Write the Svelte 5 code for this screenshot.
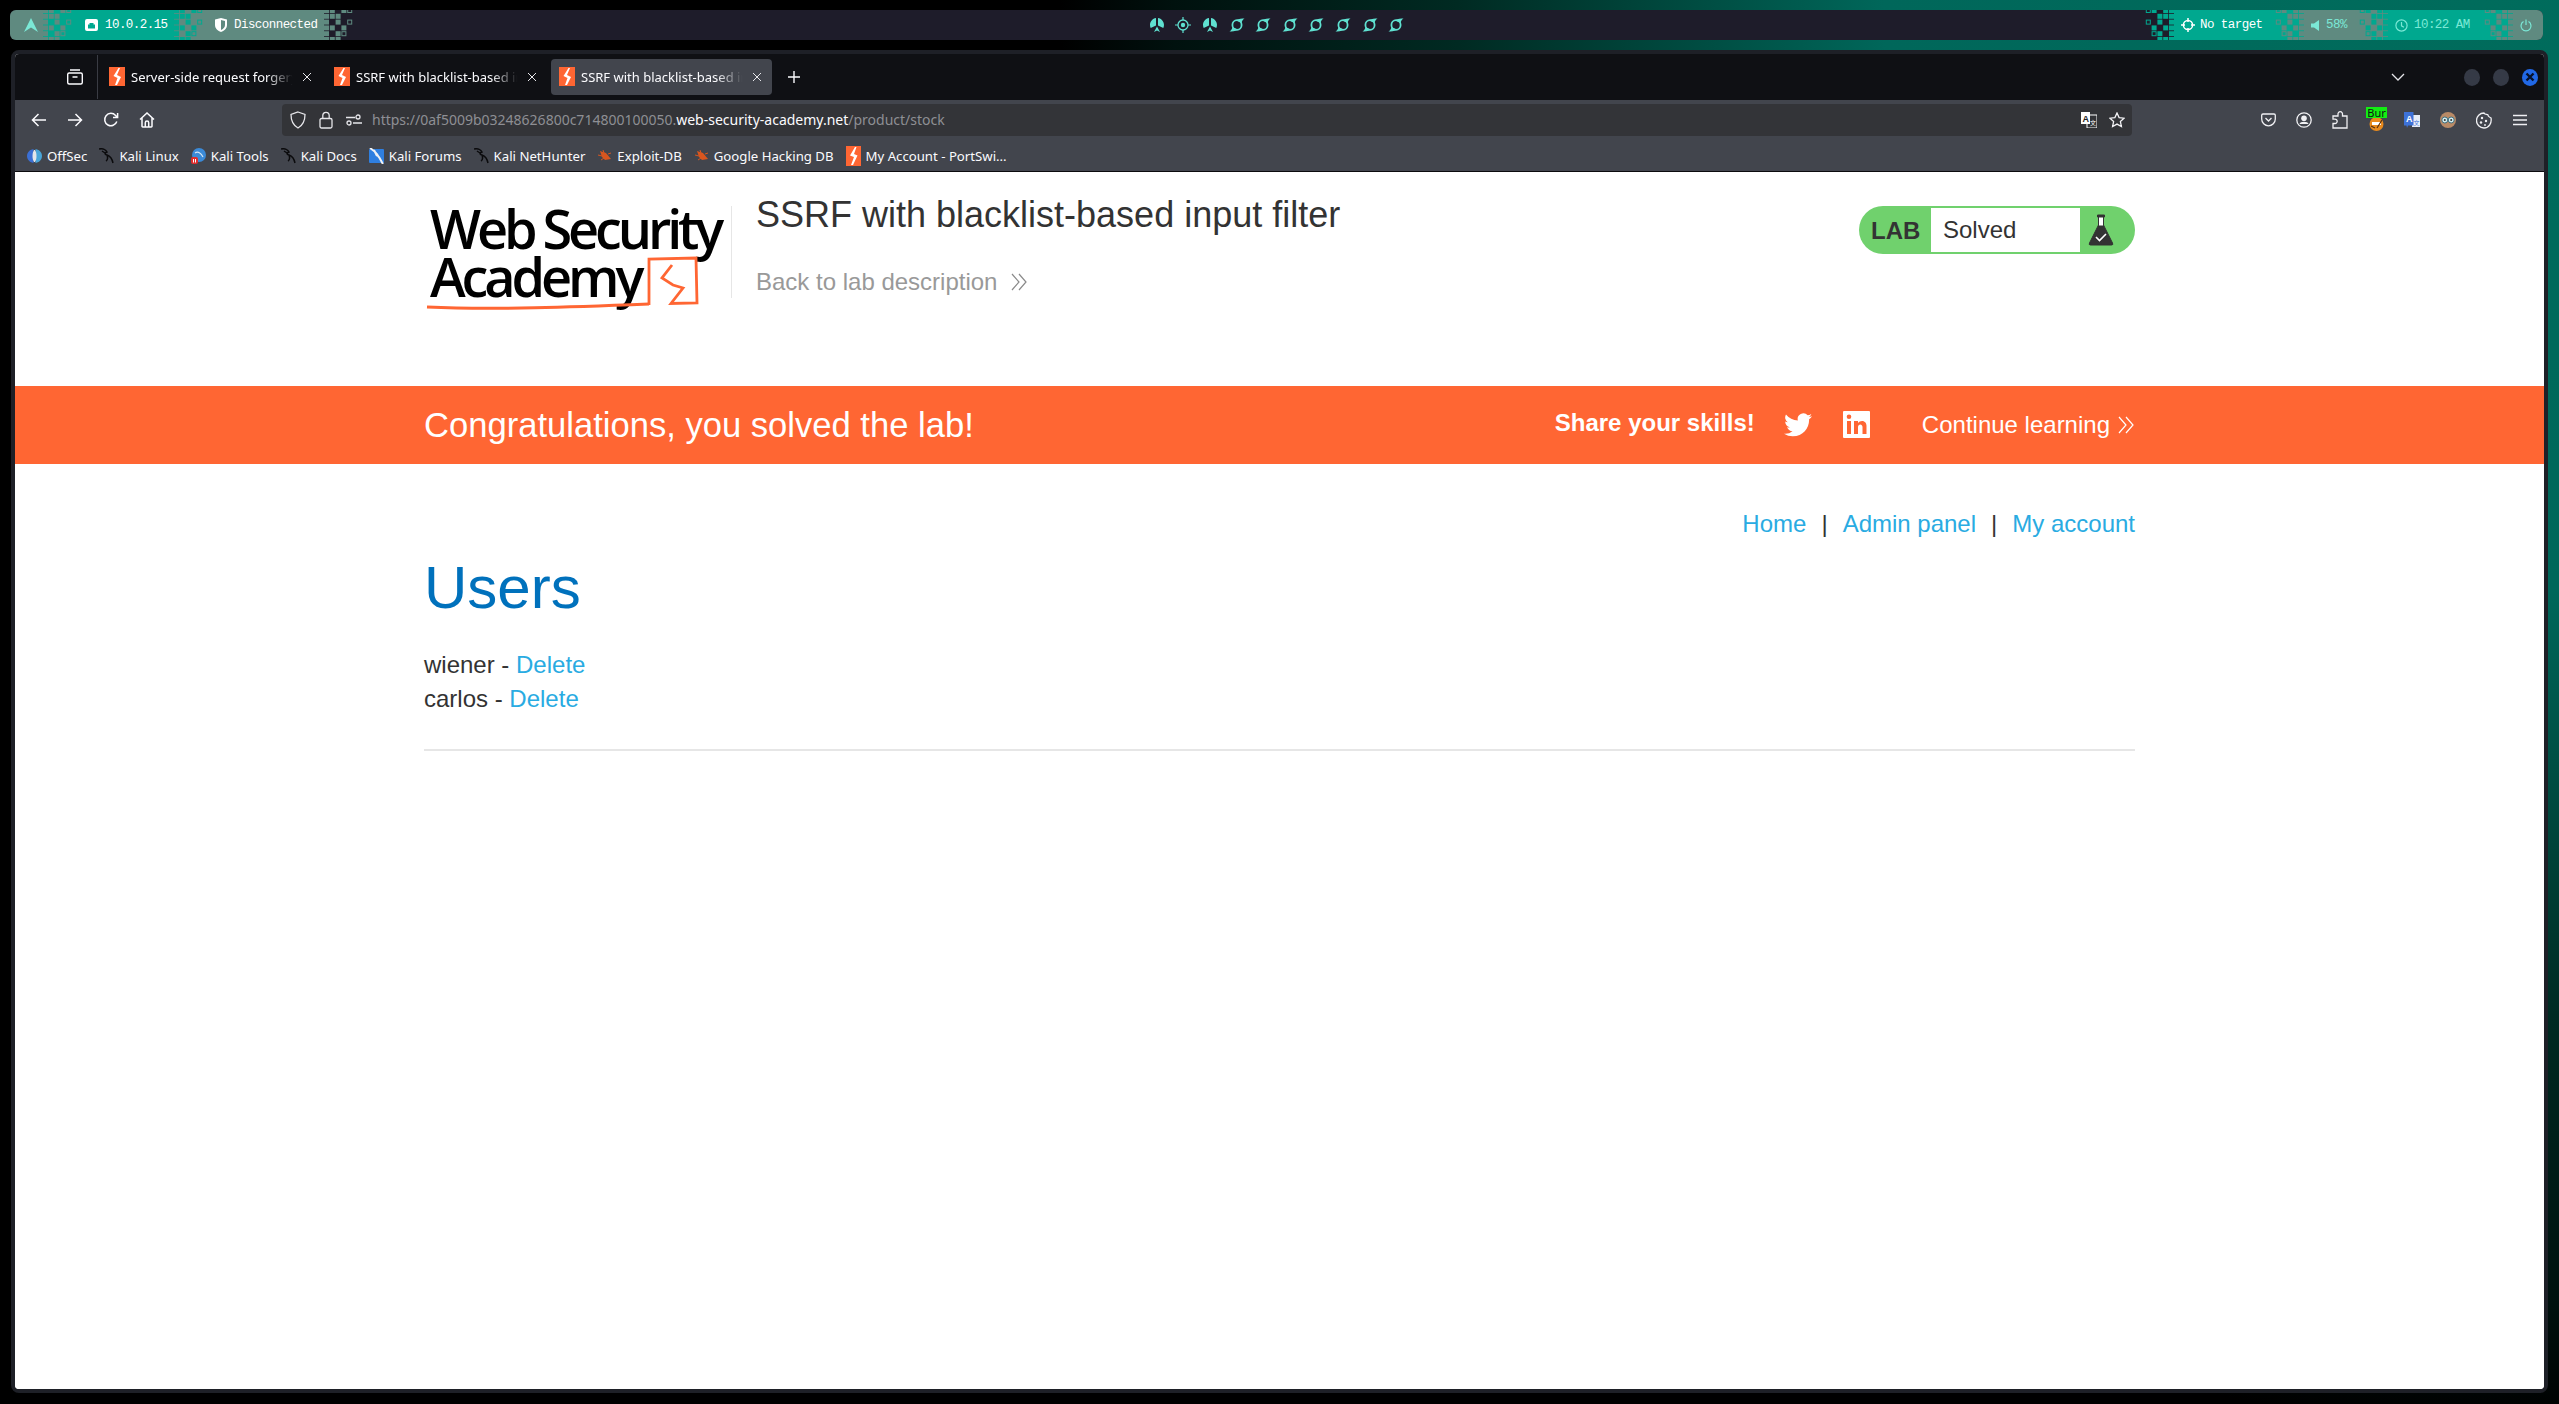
<script>
	const grey = "#5f8a80";
	const teal = "#00a88f";
	const dark = "#1e1c2a";

	// '#' solid square, 'o' outlined square, '.' nothing
	const pattern = ["##.#o", "###..", "#.#.o", "##.#.", "#.#o.", "###.."];
	const tiles = [];
	pattern.forEach((row, r) => {
		[...row].forEach((c, i) => {
			if (c !== ".") tiles.push({ x: i * 5.8, y: r * 5.8 - 2, hollow: c === "o" });
		});
	});

	const swirls = [0, 1, 2, 3, 4, 5, 6];
	const marks = [
		{ name: "OffSec", icon: "offsec" },
		{ name: "Kali Linux", icon: "kali" },
		{ name: "Kali Tools", icon: "tools" },
		{ name: "Kali Docs", icon: "kali" },
		{ name: "Kali Forums", icon: "forums" },
		{ name: "Kali NetHunter", icon: "kali" },
		{ name: "Exploit-DB", icon: "bug" },
		{ name: "Google Hacking DB", icon: "bug" },
		{ name: "My Account - PortSwi...", icon: "ps" },
	];
	const tabs = [
		{ title: "Server-side request forgery", active: false },
		{ title: "SSRF with blacklist-based input filter", active: false },
		{ title: "SSRF with blacklist-based input filter", active: true },
	];
</script>

{#snippet gap(from, to, flip)}
	<svg class="gap" width="29" height="30" viewBox="0 0 29 30">
		<rect width="29" height="30" fill={to} />
		<g transform={flip ? "translate(29 0) scale(-1 1)" : ""}>
			{#each tiles as t}
				{#if t.hollow}
					<rect x={t.x + 0.5} y={t.y + 0.5} width="4" height="4" fill="none" stroke={from} />
				{:else}
					<rect x={t.x} y={t.y} width="5" height="5" fill={from} />
				{/if}
			{/each}
		</g>
	</svg>
{/snippet}

{#snippet favicon()}
	<svg class="fav" width="16" height="19" viewBox="0 0 16 19">
		<rect width="16" height="19" fill="#ff6633" />
		<path d="M9.500 1 L4.500 9 L8.500 11 L6 18 L8 18 L12 10 L8 8 L11 1Z" fill="#fff" />
	</svg>
{/snippet}

{#snippet markIcon(kind)}
	{#if kind === "offsec"}
		<svg width="15" height="16" viewBox="0 0 15 16">
			<path d="M6.500 1 C2 2 0 5 0 8 C0 11 2 14 6.500 15Z" fill="#3b6fd4" />
			<path d="M8.500 1 C13 2 15 5 15 8 C15 11 13 14 8.500 15Z" fill="#4aa5d8" />
			<path d="M7 2 C5 5 5 11 7 14 L8 14 C10 11 10 5 8 2Z" fill="#e3e6ea" />
		</svg>
	{:else if kind === "kali"}
		<svg width="15" height="16" viewBox="0 0 15 16">
			<path d="M0 1 C4 0 7 2 8 4 C6 5 5 6 8 7 C11 8 13 10 14 15 M8 7 C9 10 9 12 7 13 M3 3 L6 5" fill="none" stroke="#0b0b0d" stroke-width="1.500" />
		</svg>
	{:else if kind === "tools"}
		<svg width="15" height="16" viewBox="0 0 15 16">
			<circle cx="8" cy="7" r="7" fill="#3b8ad8" />
			<path d="M4 5 C7 3 10 5 12 9" fill="none" stroke="#d6e6f5" stroke-width="1.200" />
			<rect x="0" y="9" width="7" height="7" rx="2" fill="#e02d2d" />
			<path d="M2.500 11v3.500M4.500 11v3.500" stroke="#fff" />
		</svg>
	{:else if kind === "forums"}
		<svg width="15" height="16" viewBox="0 0 15 16">
			<rect y="1" width="15" height="14" rx="1" fill="#2f7fe0" />
			<path d="M1 0 C5 3 8 5 9 8 C11 10 12 13 14 16 M5 2 L8 8" fill="none" stroke="#f0f2f5" stroke-width="2" />
		</svg>
	{:else if kind === "bug"}
		<svg width="15" height="16" viewBox="0 0 15 16">
			<path d="M3 3 L9 5 L14 11 L8 12 L5 9Z" fill="#d8561f" />
			<path d="M1 7 L5 8 M4 12 L7 10 M6 2 L7 5 M11 6 L14 5" stroke="#d8561f" />
		</svg>
	{:else}
		<svg width="15" height="20" viewBox="0 0 15 20">
			<rect width="15" height="20" fill="#ff6633" />
			<path d="M9 1 L4 9.500 L8 11 L5 19 L7 19 L11.500 9.500 L8 8 L10.500 1Z" fill="#fff" />
		</svg>
	{/if}
{/snippet}

<div class="desktop">
	<div class="statusbar">
		<div class="side">
			<div class="seg grey first">
				<svg width="14" height="14" viewBox="0 0 14 14"><path d="M7 0 L14 14 L7 9.500 L0 14Z" fill="#7be8d6" /></svg>
			</div>
			{@render gap(grey, teal, false)}
			<div class="seg teal ip">
				<svg width="13" height="12" viewBox="0 0 13 12"><path fill-rule="evenodd" d="M2 0h9a2 2 0 0 1 2 2v8a2 2 0 0 1-2 2H2a2 2 0 0 1-2-2V2a2 2 0 0 1 2-2ZM3 9.500h7V5.500H8.500V4h-4v1.500H3Z" fill="#fff" /></svg>
				<span>10.0.2.15</span>
			</div>
			{@render gap(teal, grey, false)}
			<div class="seg grey vpn">
				<svg width="12" height="14" viewBox="0 0 12 14"><path fill-rule="evenodd" d="M0 1.500 L6 0 L12 1.500 V7 C12 10.500 9 13 6 14 C3 13 0 10.500 0 7Z M6 2 V12 C8 11 10 9.500 10 7 V3Z" fill="#fff" /></svg>
				<span>Disconnected</span>
			</div>
			{@render gap(grey, dark, false)}
		</div>

		<div class="workspaces">
			<svg width="16" height="16" viewBox="0 0 16 16"><path d="M7 1 C3.500 1.500 1 4.500 1 8 C1 9 1.300 10 1.700 11 L7 8.500Z M9 1 C12.500 1.500 15 4.500 15 8 C15 9 14.700 10 14.300 11 L9 8.500Z M8 9.500 L11 15 L8 13.500 L5 15Z" fill="#5fe0d0" /></svg>
			<svg width="16" height="16" viewBox="0 0 16 16"><circle cx="8" cy="8" r="5" fill="none" stroke="#5fe0d0" stroke-width="1.300" /><circle cx="8" cy="8" r="2.200" fill="#5fe0d0" /><path d="M8 0v3M8 13v3M0 8h3M13 8h3" stroke="#5fe0d0" stroke-width="1.200" /></svg>
			<svg width="16" height="16" viewBox="0 0 16 16"><path d="M7 1 C3.500 1.500 1 4.500 1 8 C1 9 1.300 10 1.700 11 L7 8.500Z M9 1 C12.500 1.500 15 4.500 15 8 C15 9 14.700 10 14.300 11 L9 8.500Z M8 9.500 L11 15 L8 13.500 L5 15Z" fill="#5fe0d0" /></svg>
			{#each swirls as s (s)}
				<svg width="16" height="16" viewBox="0 0 16 16"><ellipse cx="8" cy="8" rx="4.600" ry="4.800" fill="none" stroke="#5fe0d0" stroke-width="1.800" /><path d="M7 3.500 C10 1.500 13 1.500 15.500 1.500 C14 2.500 13 3.500 12.500 6Z M9 12.500 C6 14.500 3 14.500 0.500 14.500 C2 13.500 3 12.500 3.500 10Z" fill="#5fe0d0" /></svg>
			{/each}
		</div>

		<div class="side right">
			{@render gap(teal, dark, true)}
			<div class="seg teal target">
				<svg width="14" height="14" viewBox="0 0 14 14"><circle cx="7" cy="7" r="4.600" fill="none" stroke="#fff" stroke-width="1.500" /><path d="M7 0v4M7 10v4M0 7h4M10 7h4" stroke="#fff" stroke-width="1.500" /></svg>
				<span>No target</span>
			</div>
			{@render gap(grey, teal, true)}
			<div class="seg grey vol">
				<svg width="9" height="11" viewBox="0 0 9 11"><path d="M0 3.500h3L8 0v11L3 7.500H0Z" fill="#7be8d6" /></svg>
				<span>58%</span>
			</div>
			{@render gap(teal, grey, true)}
			<div class="seg teal clock">
				<svg width="13" height="13" viewBox="0 0 13 13"><circle cx="6.500" cy="6.500" r="5.600" fill="none" stroke="#7be8d6" stroke-width="1.200" /><path d="M6.500 3v3.800l2.400 1.400" fill="none" stroke="#7be8d6" stroke-width="1.200" /></svg>
				<span>10:22 AM</span>
			</div>
			{@render gap(grey, teal, true)}
			<div class="seg grey last">
				<svg width="12" height="13" viewBox="0 0 12 13"><path d="M3.500 2.600 A5 5 0 1 0 8.500 2.600 M6 0.500v5.500" fill="none" stroke="#7be8d6" stroke-width="1.200" /></svg>
			</div>
		</div>
	</div>

	<div class="window">
		<div class="titlebar">
			<div class="tabview">
				<svg width="18" height="16" viewBox="0 0 18 16" fill="none" stroke="#fbfbfe" stroke-width="1.400"><rect x="1.700" y="4" width="14.600" height="11" rx="1.500" /><path d="M4 1h10M6.500 8h5" /></svg>
			</div>
			<div class="tabs">
				{#each tabs as tab}
					<div class="tab" class:active={tab.active}>
						{@render favicon()}
						<span class="tab-title">{tab.title}</span>
						<svg class="close" width="10" height="10" viewBox="0 0 10 10"><path d="M1 1l8 8M9 1l-8 8" stroke="#e6e6ea" stroke-width="1" /></svg>
					</div>
				{/each}
			</div>
			<svg class="plus" width="14" height="14" viewBox="0 0 14 14"><path d="M7 1v12M1 7h12" stroke="#fbfbfe" stroke-width="1.400" /></svg>
			<svg class="alltabs" width="14" height="8" viewBox="0 0 14 8"><path d="M1 1l6 6 6-6" fill="none" stroke="#e6e6ea" stroke-width="1.300" /></svg>
			<div class="winbtns">
				<span class="dot"></span>
				<span class="dot"></span>
				<span class="dot closebtn">
					<svg width="10" height="10" viewBox="0 0 10 10"><path d="M1.500 1.500l7 7M8.500 1.500l-7 7" stroke="#06122a" stroke-width="2.400" /></svg>
				</span>
			</div>
		</div>

		<div class="navrow">
			<div class="navbtn"><svg width="16" height="14" viewBox="0 0 16 14"><path d="M15 7H1.500M7.500 1 1.500 7l6 6" /></svg></div>
			<div class="navbtn"><svg width="16" height="14" viewBox="0 0 16 14"><path d="M1 7h13.500M8.500 1l6 6-6 6" /></svg></div>
			<div class="navbtn"><svg width="16" height="16" viewBox="0 0 16 16"><path d="M13.800 9.500A6.200 6.200 0 1 1 12.600 3.500L14.600 5.600M14.600 1v4.600H10" /></svg></div>
			<div class="navbtn"><svg width="16" height="16" viewBox="0 0 16 16"><path d="M1 7.500 8 1l7 6.500M3 6v8.300a.7.7 0 0 0 .7.7h8.600a.7.7 0 0 0 .7-.7V6M6.300 15v-4.300a1.700 1.700 0 0 1 3.400 0V15" /></svg></div>

			<div class="urlbar">
				<svg class="u-shield" width="16" height="18" viewBox="0 0 16 18" fill="none" stroke="#e6e6ea" stroke-width="1.300"><path d="M8 1 L15 3.500 C15 10 12.500 14.500 8 17 C3.500 14.500 1 10 1 3.500Z" /></svg>
				<svg class="u-lock" width="14" height="18" viewBox="0 0 14 18" fill="none" stroke="#e6e6ea" stroke-width="1.300"><rect x="1" y="7.500" width="12" height="9.500" rx="1.500" /><path d="M3.800 7.500V4.500a3.200 3.200 0 0 1 6.400 0v3" /></svg>
				<svg class="u-perm" width="16" height="12" viewBox="0 0 16 12" fill="none" stroke="#e6e6ea" stroke-width="1.300"><path d="M0 3.500h9M7 9h9" /><circle cx="12" cy="3" r="2" /><circle cx="3" cy="9" r="2" /></svg>
				<span class="url"><span class="dim">https://0af5009b03248626800c714800100050.</span>web-security-academy.net<span class="dim">/product/stock</span></span>
				<svg class="u-trans" width="16" height="16" viewBox="0 0 16 16"><rect x="6" y="3" width="10" height="13" fill="none" stroke="#fff" /><rect width="9" height="12" fill="#fff" /><text x="1.500" y="9.500" class="u-a">A</text><text x="9" y="13" class="u-b">文</text></svg>
				<svg class="u-star" width="16" height="16" viewBox="0 0 16 16"><path d="M8 1l2.100 4.600 5 .6-3.700 3.400 1 5L8 12.100 3.600 14.600l1-5L.9 6.200l5-.6Z" fill="none" stroke="#f3f3f6" stroke-width="1.300" /></svg>
			</div>

			<div class="tools">
				<div class="tool"><svg width="15" height="14" viewBox="0 0 15 14"><path d="M2 1h11a1.300 1.300 0 0 1 1.300 1.300V6A6.800 6.800 0 0 1 .7 6V2.300A1.300 1.300 0 0 1 2 1Z M4.500 5 7.500 8 10.500 5" fill="none" stroke="#f0f0f3" stroke-width="1.300" /></svg></div>
				<div class="tool"><svg width="16" height="16" viewBox="0 0 16 16"><circle cx="8" cy="8" r="7.200" fill="none" stroke="#f0f0f3" stroke-width="1.300" /><circle cx="8" cy="6.300" r="2.800" fill="#f0f0f3" /><path d="M3.500 12a4.600 2.900 0 0 1 9 0Z" fill="#f0f0f3" /></svg></div>
				<div class="tool"><svg width="16" height="18" viewBox="0 0 16 18"><path d="M6 3.500a2.300 2.300 0 1 1 4.500 0V5H15v12H1v-4.500h2a2.200 2.200 0 1 0 0-4.400H1V5h5Z" fill="none" stroke="#f0f0f3" stroke-width="1.300" /></svg></div>
				<div class="tool burp">
					<svg width="15" height="14" viewBox="0 0 15 14"><circle cx="7.500" cy="7" r="7" fill="#e88a1e" /><path d="M3 5h9v3H3Z" fill="#fff" /><path d="M2 9l4 2M13 3l-5 8" stroke="#5a3110" stroke-width="1.200" /></svg>
					<span class="badge">Bur</span>
				</div>
				<div class="tool"><svg width="16" height="17" viewBox="0 0 16 17"><rect x="8" y="3" width="8" height="12" fill="#e8eef8" /><path d="M0 0h9.500v13.500H4L3 16l-.5-2.500H0Z" fill="#3d72d8" /><text x="2" y="10" class="t-a">A</text><text x="9.500" y="12.500" class="t-b">文</text></svg></div>
				<div class="tool"><svg width="16" height="16" viewBox="0 0 16 16"><circle cx="8" cy="8" r="8" fill="#b98a66" /><circle cx="4.800" cy="8" r="3" fill="#d4eef0" stroke="#3f6f80" /><circle cx="11.200" cy="8" r="3" fill="#d4eef0" stroke="#3f6f80" /><circle cx="4.800" cy="8" r="1" fill="#333" /><circle cx="11.200" cy="8" r="1" fill="#333" /></svg></div>
				<div class="tool"><svg width="16" height="17" viewBox="0 0 16 17"><path d="M8 1c1 2 3 1 4 2 0 2 2 2 3 3 1 5-2 10-7 10A7.500 7.500 0 0 1 8 1Z" fill="none" stroke="#f0f0f3" stroke-width="1.300" /><circle cx="6" cy="6" r="1.200" fill="#f0f0f3" /><circle cx="5" cy="10.500" r="1.200" fill="#f0f0f3" /><circle cx="10" cy="9" r="1.200" fill="#f0f0f3" /><circle cx="9" cy="13" r=".9" fill="#f0f0f3" /></svg></div>
				<div class="tool"><svg width="14" height="12" viewBox="0 0 14 12"><path d="M0 1.500h14M0 6h14M0 10.500h14" stroke="#f0f0f3" stroke-width="1.300" /></svg></div>
			</div>
		</div>

		<div class="bookmarks">
			{#each marks as m}
				<div class="mark">
					{@render markIcon(m.icon)}
					<span>{m.name}</span>
				</div>
			{/each}
		</div>

		<div class="page">
			<header class="wrap lab-head">
				<div class="logo">
					<div class="logo-text">Web Security</div>
					<div class="logo-text second">Academy</div>
					<svg class="logo-mark" width="280" height="60" viewBox="0 0 280 60" fill="none" stroke="#ff6633">
						<path d="M3 51 C70 54 150 51 225 48" stroke-width="3" />
						<path d="M225 49 V3 L272 2 L273 47 L247 47.500 L259 32 L249 29 L238 22 L248 9" stroke-width="2.800" />
					</svg>
				</div>
				<div class="head-text">
					<h2>SSRF with blacklist-based input filter</h2>
					<div class="back">
						<span>Back to lab description</span>
						<svg width="17" height="18" viewBox="0 0 17 18" fill="none" stroke="#8a8a8a" stroke-width="1.200"><path d="M1 1l7 8-7 8M8 1l7 8-7 8" /></svg>
					</div>
				</div>
				<div class="lab-status">
					<span class="lab-word">LAB</span>
					<span class="lab-state">Solved</span>
					<span class="lab-flask">
						<svg width="26" height="32" viewBox="0 0 26 32"><path d="M9.500 1h7v2h-1v8l9 18q1 2-1 2H2.500q-2 0-1-2l9-18V3h-1Z" fill="#333" stroke="#333" /><rect x="11" y="3.500" width="4" height="8" fill="#fff" /><path d="M8 23l3.500 3.500L18 20" fill="none" stroke="#fff" stroke-width="1.600" /></svg>
					</span>
				</div>
			</header>

			<div class="banner">
				<div class="wrap banner-in">
					<h4>Congratulations, you solved the lab!</h4>
					<strong class="share">Share your skills!</strong>
					<svg class="tw" width="28" height="24" viewBox="0 0 24 20"><path d="M24 2.400c-.900.400-1.800.700-2.800.800 1-.600 1.800-1.600 2.200-2.700-1 .600-2 1-3.100 1.200A4.900 4.900 0 0 0 11.900 6.200 14 14 0 0 1 1.700 1a4.900 4.900 0 0 0 1.500 6.600c-.800 0-1.600-.200-2.200-.600 0 2.400 1.700 4.400 3.900 4.900-.700.200-1.500.200-2.200.100.600 2 2.400 3.400 4.600 3.400A9.900 9.900 0 0 1 0 17.500 14 14 0 0 0 7.500 19.700c9.100 0 14.300-7.700 14-14.600 1-.700 1.800-1.600 2.500-2.700Z" fill="#fff" /></svg>
					<svg class="li" width="27" height="27" viewBox="0 0 27 27"><path fill-rule="evenodd" d="M1 0h25a1 1 0 0 1 1 1v25a1 1 0 0 1-1 1H1a1 1 0 0 1-1-1V1a1 1 0 0 1 1-1ZM4 10v13h4V10Zm2-6.500a2.300 2.300 0 1 0 0 4.600 2.300 2.300 0 0 0 0-4.600ZM11 10v13h4v-7c0-3.500 4.500-3.500 4.500 0v7h4v-8c0-6-6.500-6-8.500-3v-2Z" fill="#fff" /></svg>
					<span class="continue">Continue learning</span>
					<svg class="chev" width="17" height="18" viewBox="0 0 17 18" fill="none" stroke="#fff" stroke-width="1.200"><path d="M1 1l7 8-7 8M8 1l7 8-7 8" /></svg>
				</div>
			</div>

			<section class="wrap content">
				<nav class="links">
					<a href="#home">Home</a><span class="pipe">|</span><a href="#admin">Admin panel</a><span class="pipe">|</span><a href="#account">My account</a>
				</nav>
				<h1>Users</h1>
				<div class="users">
					<div>wiener - <a href="#del1">Delete</a></div>
					<div>carlos - <a href="#del2">Delete</a></div>
				</div>
				<hr />
			</section>
		</div>
	</div>
</div>

<style>
	:global(body) {
		margin: 0;
		background: #000;
	}
	.desktop {
		width: 2559px;
		height: 1404px;
		box-sizing: border-box;
		padding-top: 10px;
		overflow: hidden;
		background: radial-gradient(circle 1420px at 2480px 0, #006c5c 0, #00675a 42%, #002a22 72%, #00110e 92%, #000 100%);
	}

	.statusbar {
		display: grid;
		grid-template-columns: 1fr auto 1fr;
		align-items: center;
		width: 2533px;
		height: 30px;
		margin-left: 10px;
		background: #1e1c2a;
		border-radius: 6px;
		overflow: hidden;
		font: 12.500px "Liberation Mono", monospace;
		letter-spacing: -0.55px;
		color: #fff;
	}
	.side {
		display: flex;
		height: 30px;
	}
	.side.right {
		justify-content: flex-end;
	}
	.gap {
		display: block;
		flex: none;
	}
	.seg {
		display: flex;
		align-items: center;
		height: 30px;
		box-sizing: border-box;
		flex: none;
	}
	.grey {
		background: #5f8a80;
	}
	.teal {
		background: #00a88f;
	}
	.first {
		width: 33px;
		padding-left: 14px;
	}
	.ip {
		width: 102px;
		padding-left: 13px;
		gap: 7px;
	}
	.vpn {
		width: 121px;
		padding-left: 12px;
		gap: 7px;
	}
	.target {
		width: 101px;
		padding-left: 7px;
		gap: 5px;
	}
	.vol {
		width: 55px;
		padding-left: 7px;
		gap: 6px;
		color: #7be8d6;
	}
	.clock {
		width: 96px;
		padding-left: 7px;
		gap: 6px;
		color: #7be8d6;
	}
	.last {
		width: 30px;
		padding-left: 7px;
	}
	.workspaces {
		display: flex;
		gap: 10.600px;
		align-items: center;
	}
	.workspaces svg {
		display: block;
	}

	.window {
		width: 2537px;
		height: 1343px;
		box-sizing: border-box;
		margin: 10px 0 0 11px;
		border: 4px solid #1e2027;
		border-radius: 8px;
		overflow: hidden;
		display: flex;
		flex-direction: column;
		background: #fff;
		font-family: "Noto Sans", sans-serif;
	}
	.titlebar {
		height: 46px;
		flex: none;
		display: flex;
		align-items: center;
		background: #0f1014;
	}
	.tabview {
		width: 83px;
		height: 44px;
		box-sizing: border-box;
		padding: 14px 0 0 51px;
		border-right: 1px solid #3a3c44;
	}
	.tabview svg {
		display: block;
	}
	.tabs {
		display: flex;
		gap: 4px;
		margin-left: 3px;
	}
	.tab {
		width: 221px;
		height: 36px;
		box-sizing: border-box;
		padding: 0 10px 1px 8px;
		display: flex;
		align-items: center;
		gap: 6px;
		border-radius: 4px;
		color: #fbfbfe;
		font-size: 13px;
	}
	.tab.active {
		background: #42454d;
	}
	.tab-title {
		flex: 1;
		padding-top: 1px;
		white-space: nowrap;
		overflow: hidden;
		-webkit-mask-image: linear-gradient(to right, #000 82%, transparent 98%);
		mask-image: linear-gradient(to right, #000 82%, transparent 98%);
	}
	.fav,
	.close {
		flex: none;
	}
	.plus {
		margin-left: 15px;
	}
	.alltabs {
		margin-left: 1590px;
	}
	.winbtns {
		display: flex;
		align-items: center;
		gap: 13px;
		margin-left: 59px;
	}
	.dot {
		width: 16px;
		height: 17px;
		border-radius: 50%;
		background: #353a46;
		display: flex;
		align-items: center;
		justify-content: center;
	}
	.closebtn {
		background: #2168e6;
	}

	.navrow {
		height: 36px;
		flex: none;
		box-sizing: border-box;
		padding: 4px 0 0 6px;
		display: flex;
		background: #42454d;
	}
	.navbtn {
		width: 36px;
		height: 32px;
		display: flex;
		align-items: center;
		justify-content: center;
	}
	.navbtn svg {
		fill: none;
		stroke: #fbfbfe;
		stroke-width: 1.500;
	}
	.urlbar {
		width: 1850px;
		height: 32px;
		margin-left: 117px;
		padding-left: 8px;
		box-sizing: border-box;
		display: flex;
		align-items: center;
		background: #333438;
		border-radius: 4px;
		font-size: 14px;
		color: #fbfbfe;
	}
	.u-lock {
		margin-left: 13px;
	}
	.u-perm {
		margin-left: 13px;
	}
	.url {
		margin: 0 0 2px 10px;
		width: 1700px;
		white-space: nowrap;
	}
	.dim {
		color: #8e8f94;
	}
	.u-trans {
		margin-left: 9px;
	}
	.u-star {
		margin-left: 12px;
	}
	.u-a,
	.t-a {
		font: bold 9px "Liberation Sans", sans-serif;
		fill: #222;
	}
	.t-a {
		fill: #fff;
	}
	.u-b,
	.t-b {
		font: 6px "Noto Sans CJK SC", sans-serif;
		fill: #fff;
	}
	.t-b {
		fill: #3d72d8;
	}
	.tools {
		display: flex;
		margin-left: 118px;
	}
	.tool {
		position: relative;
		width: 36px;
		height: 32px;
		display: flex;
		align-items: center;
		justify-content: center;
	}
	.burp svg {
		margin-top: 7px;
	}
	.badge {
		position: absolute;
		left: 8px;
		top: 3px;
		width: 21px;
		height: 11px;
		background: #12ee12;
		color: #111;
		font: 11px/11px "Noto Sans", sans-serif;
		text-align: center;
	}

	.bookmarks {
		height: 36px;
		flex: none;
		box-sizing: border-box;
		padding: 4px 0 0 12px;
		display: flex;
		align-items: center;
		gap: 12px;
		background: #42454d;
		border-bottom: 1px solid #0b0b0e;
		color: #fbfbfe;
		font-size: 13.200px;
	}
	.mark {
		display: flex;
		align-items: center;
		gap: 5px;
	}

	.page {
		flex: 1;
		background: #fff;
		color: #333;
		font: 24px/34px "Liberation Sans", Arial, sans-serif;
	}
	.wrap {
		width: 1711px;
		margin: 0 auto;
	}
	.lab-head {
		height: 214px;
		box-sizing: border-box;
		padding-top: 23px;
		display: flex;
		align-items: flex-start;
	}
	.logo {
		position: relative;
		width: 308px;
		height: 92px;
		box-sizing: border-box;
		margin-top: 11px;
		padding-left: 6px;
		border-right: 1px solid #e6e6e6;
		font-family: "Open Sans", sans-serif;
		color: #000;
	}
	.logo-text {
		font-size: 54px;
		line-height: 44px;
		font-weight: 600;
		letter-spacing: -4.100px;
		white-space: nowrap;
		word-spacing: -1px;
	}
	.logo-text.second {
		margin-top: 2px;
		line-height: 48px;
	}
	.logo-mark {
		position: absolute;
		left: 0;
		top: 50px;
	}
	.head-text {
		padding-left: 24px;
	}
	h2 {
		margin: 0;
		font-size: 36px;
		line-height: 40px;
		font-weight: 400;
	}
	.back {
		margin-top: 30px;
		display: flex;
		align-items: center;
		gap: 14px;
		color: #999;
	}
	.lab-status {
		margin: 11px 0 0 auto;
		width: 276px;
		height: 48px;
		box-sizing: border-box;
		padding: 2px 0;
		display: flex;
		background: #70d16d;
		border-radius: 24px;
	}
	.lab-word {
		width: 72px;
		padding-left: 12px;
		box-sizing: border-box;
		font-weight: 700;
		line-height: 45px;
		color: #333;
	}
	.lab-state {
		width: 149px;
		padding-left: 12px;
		box-sizing: border-box;
		background: #fff;
		line-height: 43px;
	}
	.lab-flask {
		padding: 6px 0 0 8px;
	}
	.lab-flask svg {
		display: block;
	}

	.banner {
		height: 78px;
		background: #ff6633;
		color: #fff;
	}
	.banner-in {
		height: 78px;
		display: flex;
		align-items: center;
	}
	h4 {
		margin: 0;
		font-size: 34.600px;
		line-height: 40px;
		font-weight: 400;
	}
	.share {
		margin: -4px 0 0 auto;
	}
	.tw {
		margin-left: 29px;
	}
	.li {
		margin: -1px 0 0 31px;
	}
	.continue {
		margin-left: 52px;
	}
	.chev {
		margin-left: 8px;
	}

	.content {
		padding-top: 43px;
	}
	.links {
		display: flex;
		justify-content: flex-end;
	}
	a {
		color: #29abe2;
		text-decoration: none;
	}
	.pipe {
		margin: 0 15px;
		color: #333;
	}
	h1 {
		margin: 11px 0 24px;
		font-size: 60px;
		line-height: 72px;
		font-weight: 400;
		color: #0071bc;
	}
	hr {
		margin: 33px 0 0;
		border: 0;
		height: 2px;
		background: #e6e6e6;
	}
</style>
